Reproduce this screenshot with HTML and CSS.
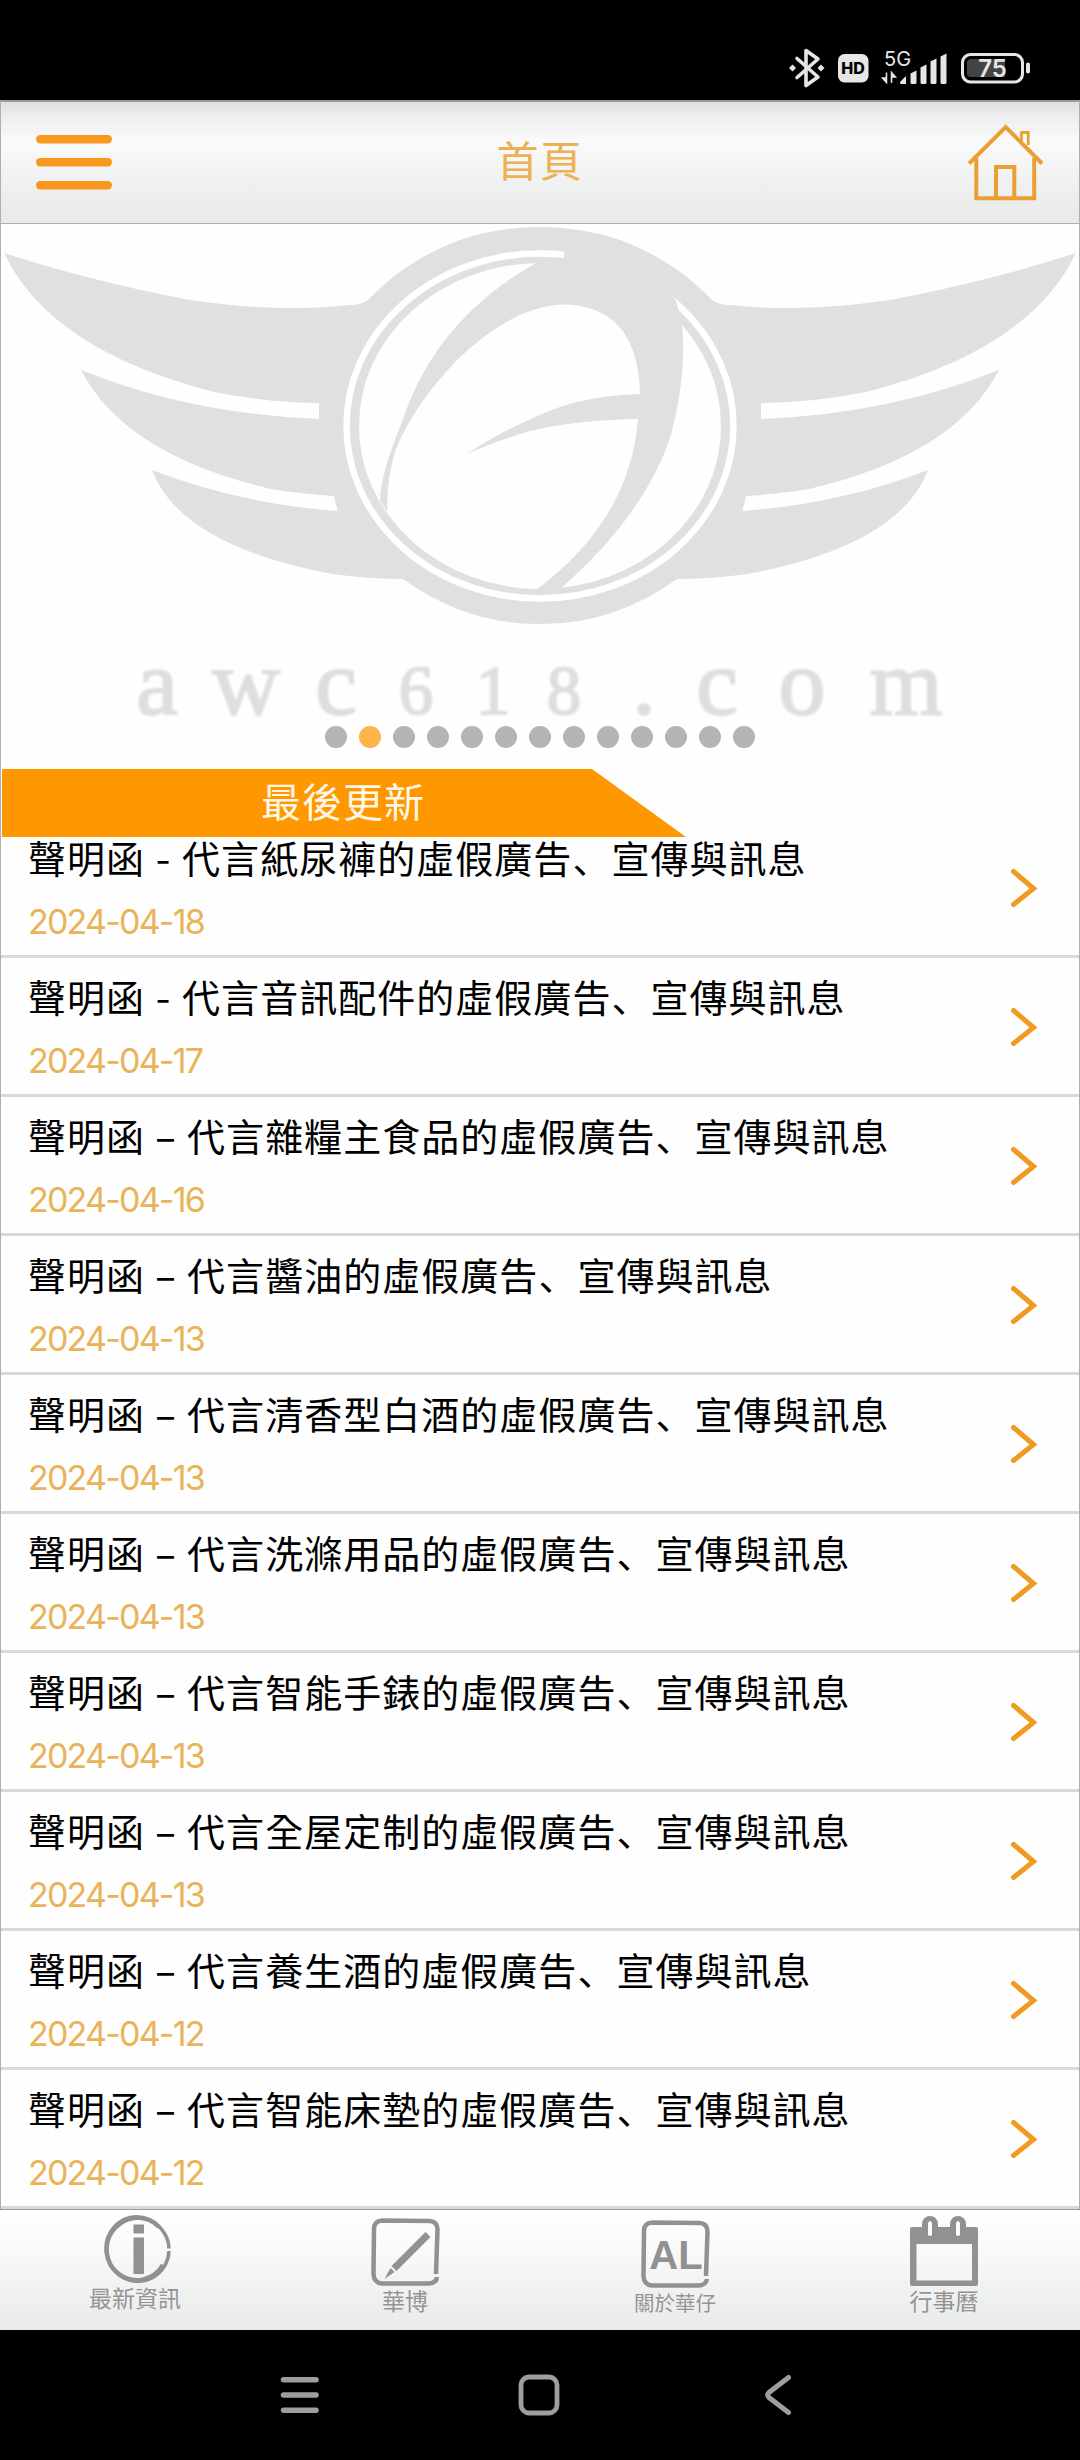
FILE: index.html
```html
<!DOCTYPE html>
<html lang="zh-Hant">
<head>
  <meta charset="utf-8">
  <title>首頁</title>
  <link rel="stylesheet" href="styles.css">
</head>
<body>
  <div class="status-bar">
    <svg class="status-icons" width="260" height="50" viewBox="780 44 260 50">
      <g fill="none" stroke="#e6e6e6" stroke-width="3.6" stroke-linejoin="round" stroke-linecap="round">
        <path d="M797 58.500L818 77L806 85.500V50.500L818 59L797 77.500"/>
      </g>
      <path d="M792.500 64.500l3.500 3.500l-3.500 3.500l-3.500-3.500zM821 64.500l3.500 3.500l-3.500 3.500l-3.500-3.500z" fill="#e6e6e6"/>
      <rect x="838" y="54" width="30.500" height="28.500" rx="6.500" fill="#e6e6e6"/>
      <text x="853" y="73.500" class="hd">HD</text>
      <text x="884" y="66" class="net">5G</text>
      <path d="M886.500 72.500v10l-4-4.500h3M891.500 83v-10.500l4 4.500h-3" fill="#e6e6e6" stroke="#e6e6e6" stroke-width="1.500"/>
      <g fill="#e6e6e6">
        <path d="M900 82l6-6v8h-5q-1 0-1-2z"/>
        <path d="M910.500 73.500l6-3v12q0 1.500-1.500 1.500h-3q-1.500 0-1.500-1.500z"/>
        <path d="M920.500 67.500l6-3v18q0 1.500-1.500 1.500h-3q-1.500 0-1.500-1.500z"/>
        <path d="M930.500 61.500l6-3v24q0 1.500-1.500 1.500h-3q-1.500 0-1.500-1.500z"/>
        <path d="M940.500 56.500l6-3v29q0 1.500-1.500 1.500h-3q-1.500 0-1.500-1.500z"/>
      </g>
      <rect x="962.500" y="54.500" width="60" height="27.500" rx="8" fill="none" stroke="#e6e6e6" stroke-width="3"/>
      <path d="M971 59h34v18h-34q-4 0-4-4v-10q0-4 4-4z" fill="#444"/>
      <rect x="1026" y="62.500" width="4" height="11" rx="2" fill="#e6e6e6"/>
      <text x="992.500" y="77" class="battery">75</text>
    </svg>
  </div>

  <header class="header">
    <svg width="76" height="56" viewBox="0 0 76 56" fill="#f8991d">
      <rect width="76" height="8.500" rx="4.200"/>
      <rect y="23" width="76" height="8.500" rx="4.200"/>
      <rect y="46" width="76" height="8.500" rx="4.200"/>
    </svg>
    <h1>首頁</h1>
    <svg width="76" height="78" viewBox="968 123 76 78" fill="none" stroke="#eaa030" stroke-width="4">
      <path d="M969 162.500L1005.700 126L1042 162.500"/>
      <path d="M976.300 157V197.300H1034.200V157"/>
      <path d="M996 197V166H1014.300V197"/>
      <path d="M1021.500 140V131.500H1028.200V144" stroke-width="2.800"/>
    </svg>
  </header>

  <main class="page">
    <section class="banner">
      <svg class="logo" width="1078" height="545" viewBox="1 224 1078 545">
        <defs>
          <path id="wing" d="M4 253Q90 281 190 300Q280 313 350 305Q361 305 368 300Q390 277 413 263Q437 248 463 239Q500 227 541 227V624Q467 625 403 579Q370 579 332 574Q180 545 152 470Q240 504 337.500 511L334 496Q300 494 271 489Q125 455 81 370Q190 414 319 419V403Q270 403 214 392Q50 350 4 253Z"/>
        </defs>
        <g fill="#e0e0e0">
          <use href="#wing"/>
          <use href="#wing" transform="translate(1080 0) scale(-1 1)"/>
        </g>
        <ellipse cx="540" cy="426" rx="193.500" ry="172.500" fill="none" stroke="#fff" stroke-width="6.500"/>
        <ellipse cx="540" cy="426" rx="181" ry="163" fill="#fefefe"/>
        <g fill="#e0e0e0">
          <path d="M536 263Q435 320 402 422Q380 475 380 501L387.500 512Q386 480 396 449Q414 405 457 360Q515 304 567 304.500Q638 308 640 394Q580 396 540 415Q495 434 466 455Q490 443 530 431Q575 420 638 419Q630 520 536 590L560 589Q645 515 671 435Q687 375 682 324L676 300Q620 238 564 246V258Z"/>
        </g>
        <g class="logo-text">
          <text x="157">a</text>
          <text x="246">w</text>
          <text x="336">c</text>
          <text x="416" class="digit">6</text>
          <text x="493" class="digit">1</text>
          <text x="564" class="digit">8</text>
          <text x="644">.</text>
          <text x="717">c</text>
          <text x="802">o</text>
          <text x="906">m</text>
        </g>
      </svg>
      <div class="dots">
        <i></i><i class="active"></i><i></i><i></i><i></i><i></i><i></i><i></i><i></i><i></i><i></i><i></i><i></i>
      </div>
    </section>

    <h2 class="ribbon">最後更新</h2>

    <ul class="news" id="newsList"></ul>
  </main>

  <nav class="tabs">
    <a class="tab info">
      <svg width="70" height="70" viewBox="0 0 70 70">
        <path d="M67 34.500A31 31.500 0 1 0 67 37" fill="none" stroke="#919191" stroke-width="3.500"/>
        <path d="M57 13A30.500 31.500 0 1 0 61 51" fill="none" stroke="#919191" stroke-width="4.500"/>
        <path d="M31.500 10.500h10.500v9h-10.500zM31.500 23.500h10.500v36.500h-10.500z" fill="#919191"/>
      </svg>
      <span>最新資訊</span>
    </a>
    <a class="tab blog">
      <svg width="70" height="70" viewBox="0 0 70 70">
        <path d="M66 57L67.500 12Q67 4 59 4L12 3.500Q4 4 4 12L3.500 57Q4 66 12 66.500H59Q66.500 66 67 60" fill="none" stroke="#919191" stroke-width="4.500"/>
        <path d="M55.500 15l5 5l-34 34l-5-5zM20.500 51l4 4l-10 7z" fill="#919191"/>
      </svg>
      <span>華博</span>
    </a>
    <a class="tab about">
      <svg width="70" height="70" viewBox="0 0 70 70">
        <path d="M66 57L67.500 12Q67 4 59 4L12 3.500Q4 4 4 12L3.500 57Q4 66 12 66.500H59Q66 66 67 60" fill="none" stroke="#919191" stroke-width="4.500"/>
        <text x="36" y="50" class="al">AL</text>
      </svg>
      <span>關於華仔</span>
    </a>
    <a class="tab calendar">
      <svg width="70" height="72" viewBox="0 0 70 72">
        <path fill-rule="evenodd" fill="#919191" d="M3 12H13V9a8 8 0 0 1 16 0v3H41V9a8 8 0 0 1 16 0v3H67Q69 12 69 14V69Q69 71 67 71H3Q1 71 1 69V14Q1 12 3 12ZM7.500 29V65.500H63V29ZM19 8V20q2 2 4 0V8q-2-4-4 0ZM47 8V20q2 2 4 0V8q-2-4-4 0Z"/>
      </svg>
      <span>行事曆</span>
    </a>
  </nav>

  <div class="system-nav">
    <svg width="40" height="42" viewBox="0 0 40 42" stroke="#9e9e9e" stroke-width="5.500" stroke-linecap="round">
      <path d="M3.500 5.700H36M3.500 21H36M3.500 36.300H36"/>
    </svg>
    <svg width="42" height="42" viewBox="0 0 42 42" fill="none" stroke="#9e9e9e" stroke-width="4.800">
      <rect x="3" y="3" width="36" height="36" rx="8"/>
    </svg>
    <svg width="30" height="42" viewBox="0 0 30 42" fill="none" stroke="#9e9e9e" stroke-width="5" stroke-linecap="round">
      <path d="M25.500 3.500L6 18.500Q3.500 21 6 23.500L25.500 38.500"/>
    </svg>
  </div>

  <script>
    const news = [
      ['聲明函', '-', '代言紙尿褲的虛假廣告、宣傳與訊息', '2024-04-18'],
      ['聲明函', '-', '代言音訊配件的虛假廣告、宣傳與訊息', '2024-04-17'],
      ['聲明函', '–', '代言雜糧主食品的虛假廣告、宣傳與訊息', '2024-04-16'],
      ['聲明函', '–', '代言醬油的虛假廣告、宣傳與訊息', '2024-04-13'],
      ['聲明函', '–', '代言清香型白酒的虛假廣告、宣傳與訊息', '2024-04-13'],
      ['聲明函', '–', '代言洗滌用品的虛假廣告、宣傳與訊息', '2024-04-13'],
      ['聲明函', '–', '代言智能手錶的虛假廣告、宣傳與訊息', '2024-04-13'],
      ['聲明函', '–', '代言全屋定制的虛假廣告、宣傳與訊息', '2024-04-13'],
      ['聲明函', '–', '代言養生酒的虛假廣告、宣傳與訊息', '2024-04-12'],
      ['聲明函', '–', '代言智能床墊的虛假廣告、宣傳與訊息', '2024-04-12']
    ];

    const newsList = document.getElementById('newsList');
    news.forEach(([type, dash, title, date]) => {
      const li = document.createElement('li');
      li.innerHTML = `
        <div>
          <p class="title">${type}<span class="${dash === '-' ? 'hyphen' : 'dash'}">${dash}</span>${title.replace('、', '<b lang="zh-Hans">、</b>')}</p>
          <p class="date">${date}</p>
        </div>
        <svg width="28" height="40" viewBox="0 0 28 40" fill="none" stroke="#f09a22" stroke-width="5" stroke-linecap="round">
          <path d="M3.500 3.500L23.500 20.500L3.500 36.500"/>
        </svg>
      `;
      newsList.appendChild(li);
    });
  </script>
</body>
</html>
```
FILE: styles.css
```css
* {
  box-sizing: border-box;
}

body {
  margin: 0;
  width: 1080px;
  font-family: "Noto Sans CJK TC", sans-serif;
  background: #fefefe;
}

h1, h2, p, ul {
  margin: 0;
  padding: 0;
  font-weight: 400;
}

svg {
  display: block;
  flex: none;
}

.status-bar {
  height: 100px;
  background: #000;
  display: flex;
  justify-content: flex-end;
  padding: 44px 40px 0 0;
}

.status-bar text {
  font-family: Inter, sans-serif;
  fill: #e6e6e6;
}

.status-bar .hd {
  font-size: 16px;
  font-weight: 800;
  text-anchor: middle;
  fill: #000;
}

.status-bar .net {
  font-size: 20px;
}

.status-bar .battery {
  font-size: 24px;
  font-weight: 600;
  text-anchor: middle;
}

.header {
  height: 124px;
  padding: 0 35px;
  display: flex;
  align-items: center;
  justify-content: space-between;
  border: 1px solid #aeb0b0;
  border-top: 2px solid #999;
  background: linear-gradient(#e0e0e0, #eee 12%, #fafafa 32%, #f7f7f7 45%, #edeeee 75%, #e9ebea);
}

.header h1 {
  font-size: 42px;
  line-height: 60px;
  letter-spacing: 1.5px;
  padding-bottom: 8px;
  color: #ecb055;
}

.page {
  border: 1px solid #aeb0b0;
  border-width: 0 1px;
}

.banner {
  position: relative;
  height: 545px;
}

.logo-text text {
  font-family: "Liberation Serif", serif;
  font-size: 94px;
  text-anchor: middle;
  fill: #dedede;
  stroke: #dedede;
  stroke-width: 2px;
}

.logo-text {
  transform: translateY(714px);
  filter: blur(1px);
}

.logo-text .digit {
  font-size: 69px;
}

.dots {
  position: absolute;
  left: 0;
  right: 0;
  bottom: 21px;
  display: flex;
  justify-content: center;
  gap: 12px;
}

.dots i {
  width: 22px;
  height: 22px;
  border-radius: 50%;
  background: #b4b4b4;
}

.dots .active {
  background: #ffb34d;
}

.ribbon {
  position: relative;
  width: 684px;
  height: 68px;
  margin: 0 0 -18px 1px;
  padding-right: 2px;
  background: #ff9800;
  clip-path: polygon(0 0, 590px 0, 100% 100%, 0 100%);
  color: #fff8e8;
  font-size: 40px;
  line-height: 63px;
  letter-spacing: 1px;
  text-align: center;
}

.news {
  list-style: none;
}

.news li {
  height: 139px;
  padding: 10px 41px 0 27px;
  border-bottom: 3px solid #d9dbdb;
  display: flex;
  justify-content: space-between;
}

.news svg {
  margin-top: 39px;
}

.title {
  font-size: 38px;
  line-height: 56px;
  letter-spacing: 1.03px;
  color: #000;
  white-space: nowrap;
}

.title b {
  font-family: "Noto Sans CJK SC", sans-serif;
  font-weight: 400;
}

.title span {
  display: inline-block;
  font-family: Inter, sans-serif;
  font-size: 34px;
  line-height: 40px;
  text-align: center;
}

.title .hyphen {
  width: 37px;
}

.title .dash {
  width: 42px;
}

.date {
  font-family: Inter, sans-serif;
  font-size: 34px;
  line-height: 40px;
  margin-top: 17px;
  letter-spacing: -1.8px;
  color: #e9b359;
}

.tabs {
  height: 121px;
  display: flex;
  border-top: 1px solid #999;
  background: linear-gradient(#fff, #f8f9f9 35%, #edeeee 80%, #e9ebea);
}

.tab {
  width: 270px;
  display: flex;
  flex-direction: column;
  align-items: center;
  color: #949494;
  font-size: 23px;
  line-height: 26px;
}

.info {
  padding-top: 4px;
}

.info svg {
  margin-left: 3px;
}

.blog {
  padding-top: 7px;
}

.about {
  padding-top: 9px;
  font-size: 20.5px;
}

.calendar {
  padding-top: 5px;
  padding-right: 2px;
}

.al {
  font-family: "Liberation Sans", sans-serif;
  font-size: 40px;
  font-weight: 700;
  text-anchor: middle;
  fill: #919191;
}

.system-nav {
  height: 130px;
  padding: 0 182px 0 180px;
  background: #000;
  display: grid;
  grid-template-columns: 1fr 1fr 1fr;
  align-items: center;
  justify-items: center;
}
```
